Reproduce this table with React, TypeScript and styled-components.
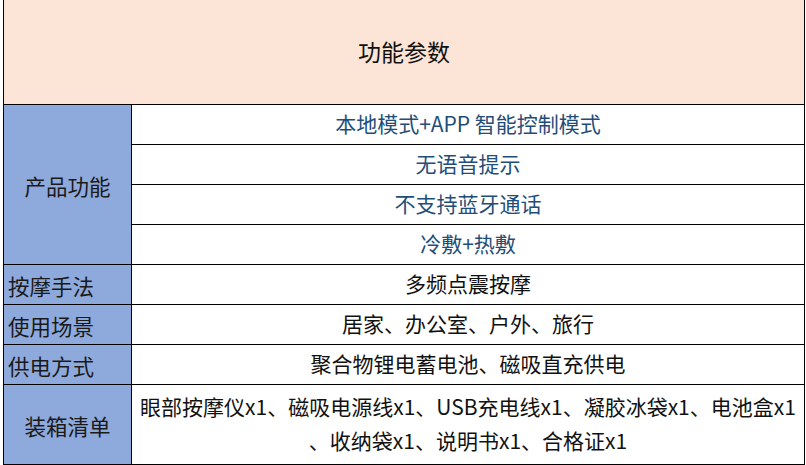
import styled, { createGlobalStyle } from "styled-components";

const GlobalStyle = createGlobalStyle`
  html, body {
    margin: 0;
    padding: 0;
    background: #ffffff;
  }
  body {
    font-family: "Noto Sans CJK SC", "Liberation Sans", sans-serif;
  }
`;

const Sheet = styled.div`
  display: grid;
  grid-template-columns: 128px 673px;
  margin-left: 3px;
  border-left: 1px solid #000;
  color: #111;
  font-size: 21px;
`;

const Title = styled.div`
  grid-column: 1 / span 2;
  height: 105px;
  box-sizing: border-box;
  display: flex;
  align-items: center;
  justify-content: center;
  padding-bottom: 2px;
  background: #fce4d6;
  border-right: 1px solid #000;
  border-bottom: 1px solid #000;
  font-size: 23px;
`;

const Label = styled.div<{ $span?: number; $center?: boolean }>`
  grid-row: span ${(p) => p.$span ?? 1};
  display: flex;
  align-items: center;
  justify-content: ${(p) => (p.$center ? "center" : "flex-start")};
  padding: 1px 0 0 ${(p) => (p.$center ? 0 : 4)}px;
  box-sizing: border-box;
  background: #8ea9db;
  border-right: 1px solid #000;
  border-bottom: 1px solid #000;
  color: #1a1a1a;
  font-size: 21.5px;
  white-space: nowrap;
`;

const Value = styled.div<{ $tall?: boolean; $blue?: boolean }>`
  height: ${(p) => (p.$tall ? 80 : 40)}px;
  box-sizing: border-box;
  display: flex;
  align-items: center;
  justify-content: center;
  text-align: center;
  padding-bottom: 3px;
  border-right: 1px solid #000;
  border-bottom: 1px solid #000;
  color: ${(p) => (p.$blue ? "#1f4e79" : "#111")};
  line-height: 34px;
  white-space: nowrap;
`;

const features = [
  "本地模式+APP 智能控制模式",
  "无语音提示",
  "不支持蓝牙通话",
  "冷敷+热敷",
];

export default function App(): JSX.Element {
  return (
    <>
      <GlobalStyle />
      <Sheet>
        <Title>功能参数</Title>

        <Label $span={features.length} $center>
          产品功能
        </Label>
        {features.map((f) => (
          <Value key={f} $blue>
            {f}
          </Value>
        ))}

        <Label>按摩手法</Label>
        <Value>多频点震按摩</Value>

        <Label>使用场景</Label>
        <Value>居家、办公室、户外、旅行</Value>

        <Label>供电方式</Label>
        <Value>聚合物锂电蓄电池、磁吸直充供电</Value>

        <Label $center>装箱清单</Label>
        <Value $tall>
          眼部按摩仪x1、磁吸电源线x1、USB充电线x1、凝胶冰袋x1、电池盒x1
          <br />
          、收纳袋x1、说明书x1、合格证x1
        </Value>
      </Sheet>
    </>
  );
}
